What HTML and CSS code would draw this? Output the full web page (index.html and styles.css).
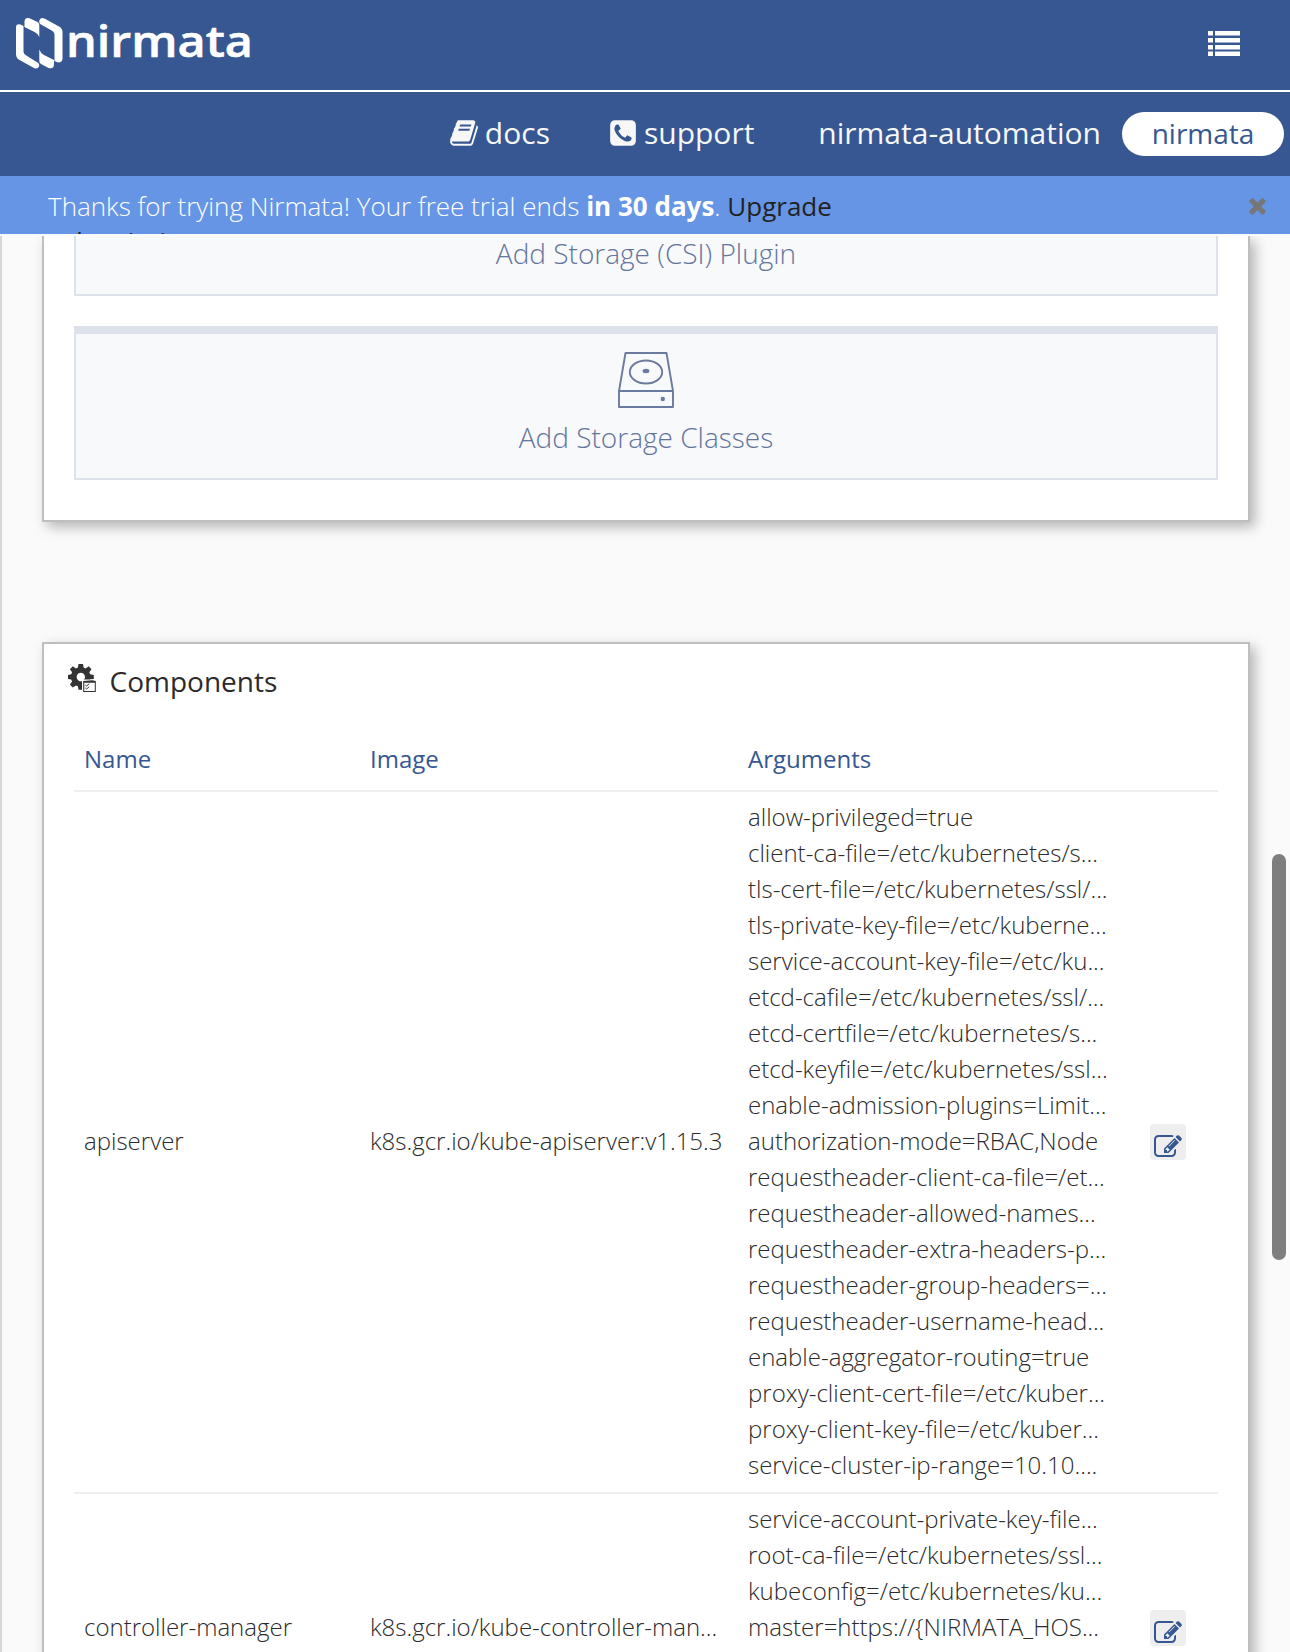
FILE: index.html
```html
<!DOCTYPE html>
<html lang="en">
<head>
<meta charset="utf-8">
<title>Nirmata</title>
<link rel="stylesheet" href="styles.css">
</head>
<body>
<div class="app">
  <header class="topbar">
    <svg class="logo" width="240" height="60" viewBox="0 0 240 60" fill="#fff">
      <path d="M1 12.500Q1 8.500 5.500 9.500L8.500 11V36.500Q8.500 38.500 10.500 40L22.500 47.500Q25 49 24 51.500Q22.500 54.500 19 53L4.500 45Q1 43 1 39Z"/>
      <path d="M9.500 12V7Q9.500 2 14.500 3.200L22.500 7Q24.300 8 24.300 10V22Q23 18.500 19.500 17Z"/>
      <path d="M47.500 43.500Q47.500 47.500 43 47.500L39.500 46V19.500Q39.500 17.500 37.500 16L26 9.500Q23.500 8 24.500 5Q26 1.800 29.500 3.500L44 11.500Q47.500 13.500 47.500 17Z"/>
      <path d="M39 45V49Q39 54.500 33.500 53L26 49Q24.300 48 24.300 46V34.500Q25.500 38 29 40Z"/>
      <text class="wordmark" x="51" y="42" textLength="187" lengthAdjust="spacingAndGlyphs">nirmata</text>
    </svg>
    <svg class="menu-icon" width="32" height="25" viewBox="0 0 32 25" fill="#fff">
      <path d="M0 0h5v4.500H0zM7 0h25v4.500H7zM0 7h5v4.500H0zM7 7h25v4.500H7zM0 14h5v4.500H0zM7 14h25v4.500H7zM0 20.500h5v4.500H0zM7 20.500h25v4.500H7z"/>
    </svg>
  </header>
  <nav class="nav">
    <a class="nav-link docs"><svg width="30" height="30" viewBox="0 0 1792 1792"><path fill="currentColor" d="M1703 478q40 57 18 129l-275 906q-19 64-76.500 107.500t-122.500 43.500h-923q-77 0-148.500-53.500t-99.500-131.500q-24-67-2-127 0-4 3-27t4-37q1-8-3-21.500t-3-19.500q2-11 8-21t16.500-23.500 16.500-23.500q23-38 45-91.500t30-91.500q3-10 .5-30t-.5-28q3-11 17-28t17-23q21-36 42-92t25-90q1-9-2.500-32t.5-28q4-13 22-30.500t22-22.500q19-26 42.500-84.500t27.500-96.500q1-8-3-25.500t-2-26.500q2-8 9-18t18-23 17-21q8-12 16.500-30.500t15-35 16-36 19.500-32 26.500-23.500 36-11.500 47.500 5.500l-1 3q38-9 51-9h761q74 0 114 56t18 130l-274 906q-36 119-71.500 153.500t-128.500 34.500h-869q-27 0-38 15-11 16-1 43 24 70 144 70h923q29 0 56-15.500t35-41.500l300-987q7-22 5-57 38 15 59 43zm-1064 2q-4 13 2 22.500t20 9.500h608q13 0 25.500-9.500t16.500-22.500l21-64q4-13-2-22.500t-20-9.500h-608q-13 0-25.500 9.500t-16.500 22.500zm-83 256q-4 13 2 22.500t20 9.500h608q13 0 25.500-9.500t16.500-22.500l21-64q4-13-2-22.500t-20-9.500h-608q-13 0-25.500 9.500t-16.500 22.500z"/></svg><span>docs</span></a>
    <a class="nav-link support"><svg width="30" height="30" viewBox="0 0 1792 1792"><path fill="currentColor" d="M1408 1193q0-11-2-16t-18-16.500-40.500-25-47.500-26.500-45.500-25-28.500-15q-5-3-19-13t-25-15-21-5q-15 0-36.500 20.500t-39.500 45-38.500 45-33.500 20.500q-7 0-16.500-3.500t-15.500-6.500-17-9.500-14-8.500q-99-55-170-126.500t-127-170.500q-2-3-8.500-14t-9.500-17-6.500-15.500-3.500-16.500q0-13 20.500-33.500t45-38.500 45-39.500 20.500-36.500q0-10-5-21t-15-25-13-19q-3-6-15-28.500t-25-45.500-26.500-47.500-25-40.500-16.500-18-16-2q-48 0-101 22-46 21-80 94.500t-34 130.500q0 16 2.500 34t5 30.500 9 33 10 29.500 12.500 33 11 30q60 164 216.500 320.500t320.500 216.500q6 2 30 11t33 12.500 29.500 10 33 9 30.500 5 34 2.500q57 0 130.500-34t94.500-80q22-53 22-101zm256-777v960q0 119-84.500 203.500t-203.500 84.500h-960q-119 0-203.500-84.500t-84.500-203.500v-960q0-119 84.500-203.500t203.500-84.500h960q119 0 203.500 84.500t84.500 203.500z"/></svg><span>support</span></a>
    <a class="nav-link account">nirmata-automation</a>
    <a class="pill">nirmata</a>
  </nav>
  <div class="banner">
    <p class="banner-text">Thanks for trying Nirmata! Your free trial ends <b>in 30 days</b>. <a class="upgrade">Upgrade subscription</a></p>
    <svg class="close" width="25" height="25" viewBox="0 0 1792 1792"><path fill="#777" d="M1490 1322q0 40-28 68l-136 136q-28 28-68 28t-68-28l-294-294-294 294q-28 28-68 28t-68-28l-136-136q-28-28-28-68t28-68l294-294-294-294q-28-28-28-68t28-68l136-136q28-28 68-28t68 28l294 294 294-294q28-28 68-28t68 28l136 136q28 28 28 68t-28 68l-294 294 294 294q28 28 28 68z"/></svg>
  </div>
  <main class="content">
    <section class="card storage">
      <div class="panel panel-cut"><span>Add Storage (CSI) Plugin</span></div>
      <div class="panel panel-full">
        <svg width="56" height="56" viewBox="0 0 56 56" fill="none" stroke="#6b7b9f" stroke-width="1.900" stroke-linejoin="round">
          <path d="M1 39L7.500 1H48.500L55 39V55H1ZM1 39H55"/>
          <ellipse cx="28" cy="20" rx="16.200" ry="11.500"/>
          <ellipse cx="28" cy="19" rx="3.400" ry="2.200" fill="#6b7b9f" stroke="none"/>
          <circle cx="44.800" cy="47" r="2.200" fill="#6b7b9f" stroke="none"/>
        </svg>
        <span>Add Storage Classes</span>
      </div>
    </section>
    <section class="card components">
      <h2 class="card-title">
        <svg width="28" height="28" viewBox="0 0 28 28" fill="#333">
          <path fill-rule="evenodd" d="M10.500 0h4.500l.6 3.600 2 .9 3.100-2.200 2.800 2.900-2.200 3 .9 2.100 3.600.6v4l-3.600.7-.9 2 2.200 3-2.800 3-3.100-2.200-2 .9-.6 3.500h-4.500l-.6-3.500-2-.9-3.100 2.200-2.900-3 2.200-3-.9-2-3.200-.7v-4l3.200-.6.9-2.100-2.200-3 2.900-2.900 3.100 2.200 2-.9zM12.800 8.800a4.200 4.200 0 1 0 .01 0z"/>
          <path fill="#fff" d="M14 15.500h14V28H14z"/>
          <path fill-rule="evenodd" d="M15.200 17l9-.8 3.600.8v11H15.200zM16.300 18.700V27h10.500v-8.300z"/>
          <path fill="none" stroke="#333" stroke-width="1" d="M17.300 21l1.300 1 2.600-2.300M17.300 24l1.300 1 2.600-2.300"/>
        </svg>
        <span>Components</span>
      </h2>
      <div class="table">
        <div class="row head"><div>Name</div><div>Image</div><div>Arguments</div></div>
        <div class="row">
          <div>apiserver</div>
          <div>k8s.gcr.io/kube-apiserver:v1.15.3</div>
          <ul class="args">
            <li>allow-privileged=true</li>
            <li>client-ca-file=/etc/kubernetes/s...</li>
            <li>tls-cert-file=/etc/kubernetes/ssl/...</li>
            <li>tls-private-key-file=/etc/kuberne...</li>
            <li>service-account-key-file=/etc/ku...</li>
            <li>etcd-cafile=/etc/kubernetes/ssl/...</li>
            <li>etcd-certfile=/etc/kubernetes/s...</li>
            <li>etcd-keyfile=/etc/kubernetes/ssl...</li>
            <li>enable-admission-plugins=Limit...</li>
            <li>authorization-mode=RBAC,Node</li>
            <li>requestheader-client-ca-file=/et...</li>
            <li>requestheader-allowed-names...</li>
            <li>requestheader-extra-headers-p...</li>
            <li>requestheader-group-headers=...</li>
            <li>requestheader-username-head...</li>
            <li>enable-aggregator-routing=true</li>
            <li>proxy-client-cert-file=/etc/kuber...</li>
            <li>proxy-client-key-file=/etc/kuber...</li>
            <li>service-cluster-ip-range=10.10....</li>
          </ul>
          <div class="action"><button class="edit" aria-label="Edit"><svg width="28" height="28" viewBox="0 0 1792 1792"><path fill="#365791" d="M888 1184l116-116-152-152-116 116v56h96v96h56zm440-720q-16-16-33 1l-350 350q-17 17-1 33t33-1l350-350q17-17 1-33zm80 594v190q0 119-84.500 203.500t-203.500 84.500h-832q-119 0-203.500-84.500t-84.500-203.500v-832q0-119 84.500-203.500t203.500-84.500h832q63 0 117 25 15 7 18 23 3 17-9 29l-49 49q-14 14-32 8-23-6-45-6h-832q-66 0-113 47t-47 113v832q0 66 47 113t113 47h832q66 0 113-47t47-113v-126q0-13 9-22l64-64q15-15 35-7t20 29zm-96-738l288 288-672 672h-288v-288zm444 132l-92 92-288-288 92-92q28-28 68-28t68 28l152 152q28 28 28 68t-28 68z"/></svg></button></div>
        </div>
        <div class="row">
          <div>controller-manager</div>
          <div>k8s.gcr.io/kube-controller-man...</div>
          <ul class="args args-long">
            <li>service-account-private-key-file...</li>
            <li>root-ca-file=/etc/kubernetes/ssl...</li>
            <li>kubeconfig=/etc/kubernetes/ku...</li>
            <li>master=https://{NIRMATA_HOS...</li>
          </ul>
          <div class="action"><button class="edit" aria-label="Edit"><svg width="28" height="28" viewBox="0 0 1792 1792"><path fill="#365791" d="M888 1184l116-116-152-152-116 116v56h96v96h56zm440-720q-16-16-33 1l-350 350q-17 17-1 33t33-1l350-350q17-17 1-33zm80 594v190q0 119-84.500 203.500t-203.500 84.500h-832q-119 0-203.500-84.500t-84.500-203.500v-832q0-119 84.500-203.500t203.500-84.500h832q63 0 117 25 15 7 18 23 3 17-9 29l-49 49q-14 14-32 8-23-6-45-6h-832q-66 0-113 47t-47 113v832q0 66 47 113t113 47h832q66 0 113-47t47-113v-126q0-13 9-22l64-64q15-15 35-7t20 29zm-96-738l288 288-672 672h-288v-288zm444 132l-92 92-288-288 92-92q28-28 68-28t68 28l152 152q28 28 28 68t-28 68z"/></svg></button></div>
        </div>
      </div>
    </section>
  </main>
  <div class="scroll-thumb"></div>
</div>
</body>
</html>
```
FILE: styles.css
```css
* { box-sizing: border-box; }

body {
  margin: 0;
  font-family: "Open Sans", "Noto Sans", sans-serif;
  font-weight: 300;
  font-size: 24px;
  line-height: 36px;
  color: #2b2b2b;
}

.app {
  position: relative;
  display: flex;
  flex-direction: column;
  width: 1290px;
  height: 1652px;
  overflow: hidden;
  background: #fafafa;
}

.topbar {
  display: flex;
  flex: none;
  justify-content: space-between;
  align-items: flex-start;
  height: 92px;
  padding: 15px 50px 0 15px;
  background: #365791;
  border-bottom: 2px solid #fff;
}
.wordmark { font-size: 43.5px; font-weight: 600; stroke: #fff; stroke-width: .6; stroke-linejoin: round; }
.menu-icon { margin-top: 16px; }

.nav {
  display: flex;
  flex: none;
  justify-content: flex-end;
  align-items: center;
  height: 84px;
  padding-right: 6px;
  background: #365791;
  color: #f7f7f7;
  font-size: 30px;
  font-weight: 400;
}
.nav-link { display: flex; align-items: center; gap: 6px; padding-bottom: 2px; }
.docs { margin-right: 58px; }
.support { margin-right: 64px; }
.account { margin-right: 21px; }
.pill {
  width: 162px;
  height: 44px;
  border-radius: 22px;
  background: #fff;
  color: #365791;
  font-size: 28px;
  line-height: 42px;
  text-align: center;
}

.banner {
  display: flex;
  flex: none;
  justify-content: space-between;
  height: 58px;
  padding: 13px 20px 0 48px;
  overflow: hidden;
  background: #6795e6;
  color: #fff;
}
.banner-text { width: 860px; margin: 0; font-size: 26px; line-height: 35px; }
.banner-text b { font-weight: 700; }
.upgrade { color: #222; font-weight: 400; }
.close { margin-top: 4px; }

.content {
  flex: 1;
  min-height: 0;
  margin-top: 2px;
  padding: 0 40px 0 40px;
  border-left: 2px solid #d6d6d6;
  overflow: hidden;
}
.card {
  background: #fff;
  border: 2px solid #bebebe;
  box-shadow: 5px 5px 12px rgba(0, 0, 0, .28);
}
.storage { height: 286px; padding: 0 30px; border-top: 0; }
.panel {
  display: flex;
  flex-direction: column;
  align-items: center;
  background: #f8f9fb;
  border: 2px solid #dde2ea;
  color: #64759b;
  font-size: 28px;
}
.panel-cut { height: 60px; border-top: 0; line-height: 34px; }
.panel-full { height: 154px; margin-top: 30px; padding-top: 18px; border-top-width: 8px; gap: 11px; }

.components { height: 1300px; margin-top: 120px; padding: 20px 30px; }
.card-title {
  display: flex;
  gap: 13.5px;
  height: 50px;
  margin: 0 0 0 -6px;
  font-size: 28px;
  line-height: 34px;
  font-weight: 400;
}
.row {
  display: grid;
  grid-template-columns: 286px 378px 380px 100px;
  align-items: center;
  padding: 7px 0 9px;
  border-top: 2px solid #eee;
}
.row > * { padding-left: 10px; white-space: nowrap; }
.row.head { height: 76px; padding: 27px 0 0; border-top: 0; color: #365791; font-weight: 400; align-items: start; }
.args { margin: 0; list-style: none; }
.args-long { min-height: 252px; }
.row > .action { display: flex; justify-content: center; padding: 2px 0 0; }
.edit {
  display: flex;
  width: 36px;
  height: 36px;
  padding: 9px 0 0 4px;
  border: 0;
  border-radius: 4px;
  background: #eee;
}
.edit svg { flex: none; }

.scroll-thumb {
  position: absolute;
  top: 854px;
  right: 4px;
  width: 14px;
  height: 406px;
  border-radius: 7px;
  background: #7e7e7e;
}
```
